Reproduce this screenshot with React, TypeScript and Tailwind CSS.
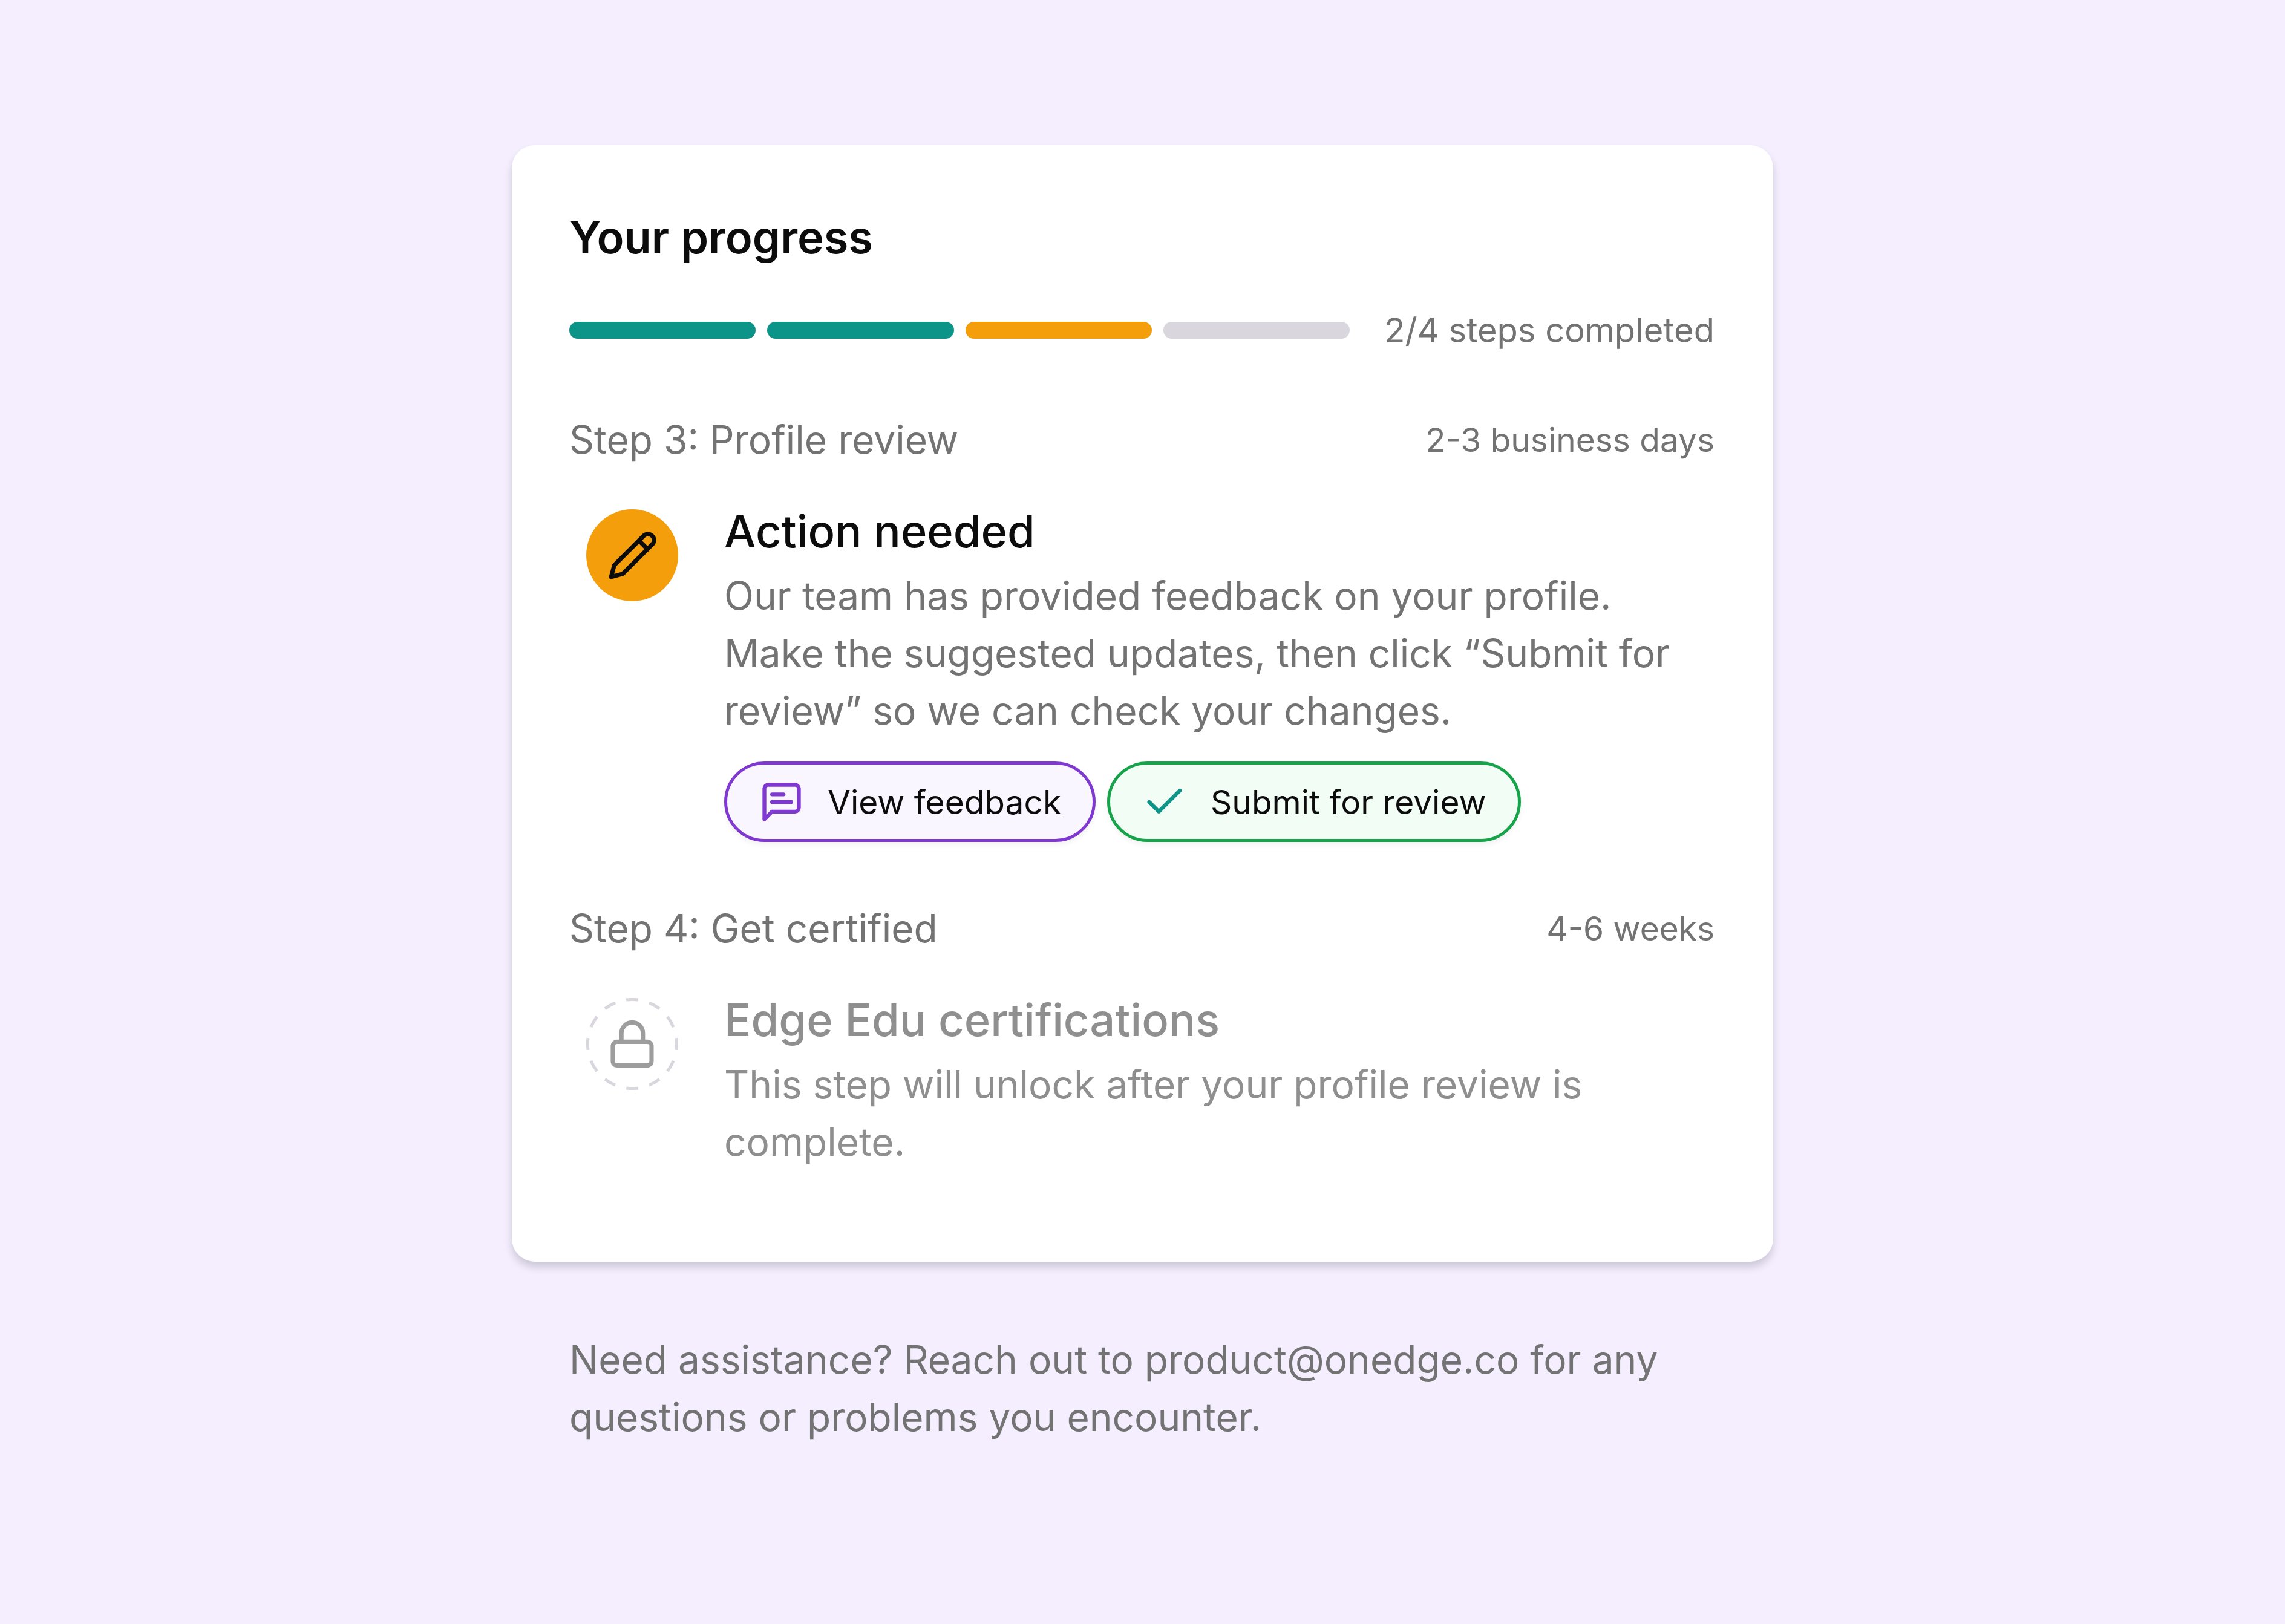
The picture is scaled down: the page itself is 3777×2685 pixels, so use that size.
import type { ReactNode } from "react";

type StepProps = {
  label: string;
  duration: string;
  title: string;
  body: string;
  icon: ReactNode;
  locked?: boolean;
  children?: ReactNode;
};

const segments = ["bg-[#0d9488]", "bg-[#0d9488]", "bg-[#f59e0b]", "bg-[#d9d6de]"];

function PencilIcon() {
  return (
    <svg className="size-[85px]" viewBox="0 0 24 24" fill="none" stroke="#0c0c0c" strokeWidth="2" strokeLinecap="round" strokeLinejoin="round" aria-hidden="true">
      <path d="M17 3a2.85 2.83 0 1 1 4 4L7.5 20.5 2 22l1.5-5.5Z" />
      <path d="m15 5 4 4" />
    </svg>
  );
}

function LockBadge() {
  return (
    <svg className="size-[152px]" viewBox="0 0 152 152" fill="none" aria-hidden="true">
      <circle cx="76" cy="76" r="73.6" stroke="#d9d6de" strokeWidth="5" pathLength="480" strokeDasharray="20.6 19.4" strokeDashoffset="10.3" />
      <g transform="translate(33.3 33.3) scale(3.555)" stroke="#9d9d9d" strokeWidth="2" strokeLinecap="round" strokeLinejoin="round">
        <rect width="18" height="11" x="3" y="11" rx="2" />
        <path d="M7 11V7a5 5 0 0 1 10 0v4" />
      </g>
    </svg>
  );
}

function FeedbackIcon() {
  return (
    <svg className="size-[76px]" viewBox="0 0 24 24" fill="none" stroke="#7f39d0" strokeWidth="2" strokeLinecap="round" strokeLinejoin="round" aria-hidden="true">
      <path d="M21 15a2 2 0 0 1-2 2H7l-4 4V5a2 2 0 0 1 2-2h14a2 2 0 0 1 2 2z" />
      <path d="M13 8H7" />
      <path d="M17 12H7" />
    </svg>
  );
}

function CheckIcon() {
  return (
    <svg className="size-[76px]" viewBox="0 0 24 24" fill="none" stroke="#0d9488" strokeWidth="2" strokeLinecap="round" strokeLinejoin="round" aria-hidden="true">
      <path d="M20 6 9 17l-5-5" />
    </svg>
  );
}

function Step({ label, duration, title, body, icon, locked, children }: StepProps) {
  return (
    <section className="mt-[95px]">
      <div className="flex items-center justify-between">
        <h2 className="text-[64px] leading-[95px] text-[#737373]">{label}</h2>
        <span className="text-[55px] leading-[76px] text-[#737373]">{duration}</span>
      </div>
      <div className="mt-[57px] flex gap-[76px] pr-8 pl-7">
        <div className="mt-[11px] shrink-0">{icon}</div>
        <div className={locked ? "text-[#8f8f8f]" : "text-[#737373]"}>
          <h3 className={locked ? "text-[74px] leading-[95px] font-medium" : "text-[74px] leading-[95px] font-medium text-[#0c0c0c]"}>{title}</h3>
          <p className="mt-[11px] text-[64px] leading-[95px]">{body}</p>
          {children}
        </div>
      </div>
    </section>
  );
}

export default function App() {
  return (
    <main className="min-h-screen bg-[#f4eeff] pt-[240px] font-['Inter',sans-serif]">
      <div className="mx-auto w-full max-w-[2085px]">
        <div className="rounded-[38px] bg-white pt-[105px] pr-[97px] pb-[151px] pl-[95px] shadow-[0_9px_14px_rgba(0,0,0,0.16)]">
          <h1 className="text-[74px] leading-[95px] font-semibold text-[#0c0c0c]">Your progress</h1>
          <div className="mt-[68px] flex items-center gap-[57px]">
            <div className="flex flex-1 gap-[19px]">
              {segments.map((color, i) => (
                <div key={i} className={`h-[28px] flex-1 rounded-full ${color}`} />
              ))}
            </div>
            <span className="text-[56px] leading-[76px] text-[#737373]">2/4 steps completed</span>
          </div>

          <Step
            label="Step 3: Profile review"
            duration="2-3 business days"
            title="Action needed"
            body="Our team has provided feedback on your profile. Make the suggested updates, then click “Submit for review” so we can check your changes."
            icon={
              <div className="flex size-[152px] items-center justify-center rounded-full bg-[#f59e0b]">
                <PencilIcon />
              </div>
            }
          >
            <div className="mt-[37px] flex gap-[19px]">
              <button type="button" className="flex h-[133px] items-center gap-[38px] rounded-full border-5 border-[#7f39d0] bg-[#f9f6ff] px-[52px] text-[55px] leading-[76px] text-[#0c0c0c] shadow-[0_5px_9px_rgba(0,0,0,0.05)]">
                <FeedbackIcon />
                View feedback
              </button>
              <button type="button" className="flex h-[133px] items-center gap-[38px] rounded-full border-5 border-[#16a34a] bg-[#f2fdf5] px-[52px] text-[55px] leading-[76px] text-[#0c0c0c] shadow-[0_5px_9px_rgba(0,0,0,0.05)]">
                <CheckIcon />
                Submit for review
              </button>
            </div>
          </Step>

          <Step
            locked
            label="Step 4: Get certified"
            duration="4-6 weeks"
            title="Edge Edu certifications"
            body="This step will unlock after your profile review is complete."
            icon={<LockBadge />}
          />
        </div>
        <p className="mt-[114px] px-[95px] text-[64px] leading-[95px] text-[#737373]">
          Need assistance? Reach out to product@onedge.co for any questions or problems you encounter.
        </p>
      </div>
    </main>
  );
}
